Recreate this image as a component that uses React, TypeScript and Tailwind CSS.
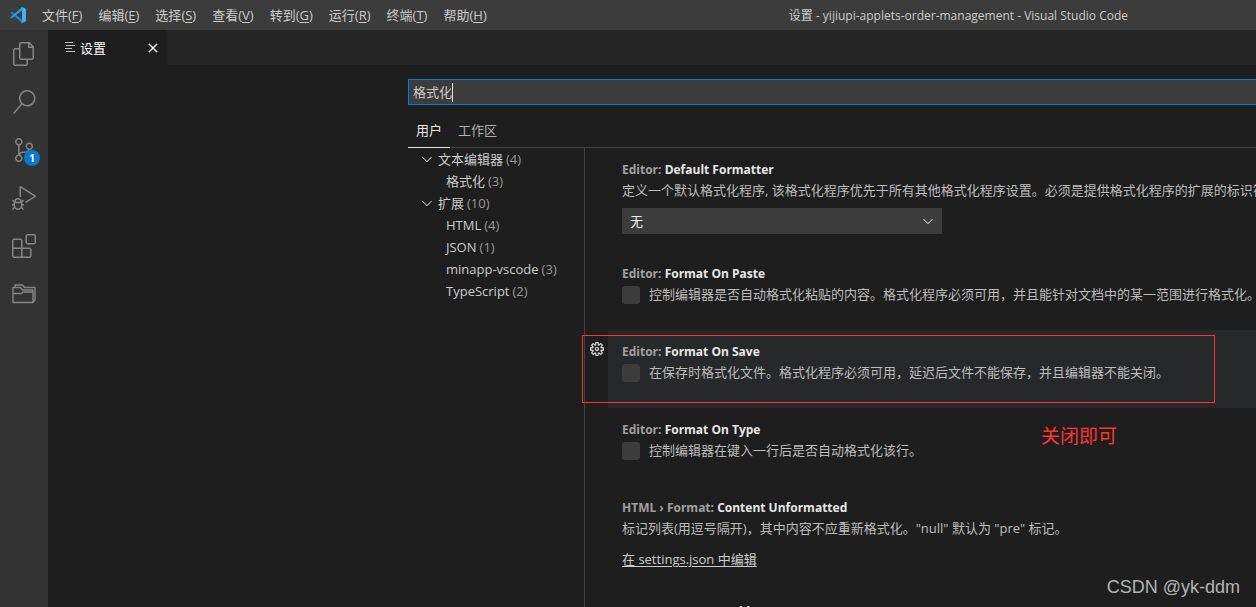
import React from 'react';
import {
  VscChevronDown,
  VscClose,
  VscDebugAlt,
  VscExtensions,
  VscFiles,
  VscSearch,
  VscSettingsGear,
  VscSourceControl,
} from 'react-icons/vsc';

const menus = [
  { label: '文件', key: 'F' },
  { label: '编辑', key: 'E' },
  { label: '选择', key: 'S' },
  { label: '查看', key: 'V' },
  { label: '转到', key: 'G' },
  { label: '运行', key: 'R' },
  { label: '终端', key: 'T' },
  { label: '帮助', key: 'H' },
];

const tree = [
  { label: '文本编辑器', count: 4, group: true },
  { label: '格式化', count: 3 },
  { label: '扩展', count: 10, group: true },
  { label: 'HTML', count: 4 },
  { label: 'JSON', count: 1 },
  { label: 'minapp-vscode', count: 3 },
  { label: 'TypeScript', count: 2 },
];

const Logo: React.FC = () => (
  <svg viewBox="0 0 100 100" className="size-4 shrink-0" aria-hidden="true">
    <path d="M4 33 10 28 76 78 74 99 4 38Q1 35 4 33Z" fill="#1b86cb" />
    <path d="M4 67 10 72 76 22 74 1 4 62Q1 65 4 67Z" fill="#1f9cf0" />
    <path d="M71 1Q75 0 78 1L97 10Q100 12 100 16V84Q100 88 97 90L78 99Q75 100 71 99L75 92V8Z" fill="#3fb0f8" />
  </svg>
);

const FoldersIcon: React.FC = () => (
  <svg viewBox="0 0 24 24" fill="none" stroke="currentColor" strokeWidth="1.4" strokeLinejoin="round" className="size-6">
    <path d="M1 20.5V5.5h7.500l2 2.500h10.500v12.500z" />
    <path d="M1 11.500h8.500l1.500-1.500h10" />
    <path d="M3 5.500V3h7.500l2 2.500h10.500v12.500l-2 2" />
  </svg>
);

const ListIcon: React.FC = () => (
  <svg viewBox="0 0 10 11" className="h-[11px] w-[10px]" stroke="#c5c5c5" aria-hidden="true">
    <path d="M0 .5h8M1 3.500h9M0 6.500h7M1 9.500h9" />
  </svg>
);

const activities = [
  { name: '资源管理器', icon: <VscFiles size={24} /> },
  { name: '搜索', icon: <VscSearch size={24} /> },
  { name: '源代码管理', icon: <VscSourceControl size={24} />, badge: 1 },
  { name: '运行和调试', icon: <VscDebugAlt size={24} /> },
  { name: '扩展', icon: <VscExtensions size={24} /> },
  { name: '项目', icon: <FoldersIcon /> },
];

const TitleBar: React.FC = () => (
  <header className="flex h-[30px] shrink-0 items-center bg-[#3c3c3c] pl-[10px] text-[#cccccc]">
    <Logo />
    <nav className="ml-2 flex">
      {menus.map((m) => (
        <button key={m.key} className="px-2">
          {m.label}(<span className="underline underline-offset-2">{m.key}</span>)
        </button>
      ))}
    </nav>
    <div className="flex-1 pt-0.5 pr-32 text-right text-xs">设置 - yijiupi-applets-order-management - Visual Studio Code</div>
  </header>
);

const ActivityBar: React.FC = () => (
  <aside className="flex w-12 shrink-0 flex-col bg-[#333333] text-[#858585]">
    {activities.map((a) => (
      <button key={a.name} aria-label={a.name} className="relative flex h-12 items-center justify-center">
        {a.icon}
        {a.badge && (
          <span className="absolute top-6 right-2 flex size-4 items-center justify-center rounded-full bg-[#007acc] text-[10px] font-bold text-white">
            {a.badge}
          </span>
        )}
      </button>
    ))}
  </aside>
);

const TreeView: React.FC = () => (
  <ul className="w-44 shrink-0">
    {tree.map((t) => (
      <li key={t.label} className={`flex h-[22px] items-center text-[#cccccc] ${t.group ? 'pl-[11px]' : 'pl-[38px]'}`}>
        {t.group && <VscChevronDown size={16} className="mr-[3px]" />}
        <span>{t.label}</span>
        <span className="ml-[3px] text-[#999999]">({t.count})</span>
      </li>
    ))}
  </ul>
);

interface SettingProps {
  scope: string;
  title: string;
  active?: boolean;
  children?: React.ReactNode;
}

const Setting: React.FC<SettingProps> = ({ scope, title, active, children }) => (
  <section className={`relative ml-[23px] pt-3 pb-[27px] pl-[14px] ${active ? 'bg-[#27282a]' : ''}`}>
    {active && (
      <button aria-label="更多操作" className="absolute top-3 -left-[18px] text-[#e0e0e0]">
        <VscSettingsGear size={14} strokeWidth={0.4} />
      </button>
    )}
    <h3 className="h-[18px] text-xs leading-5 font-bold whitespace-nowrap text-[#a0a0a0]">
      {scope}: <span className="text-[#e7e7e7]">{title}</span>
    </h3>
    {children}
    {active && <div className="pointer-events-none absolute top-[5px] right-[41px] bottom-[5px] -left-[26px] border border-[#ff3333]" />}
  </section>
);

const CheckRow: React.FC<{ children: string }> = ({ children }) => (
  <label className="mt-[3px] flex h-[18px] items-start gap-[9px] whitespace-nowrap text-[#bdbdbd]">
    <input type="checkbox" className="mt-px size-[18px] shrink-0 appearance-none rounded-[3px] bg-[#3c3c3c]" />
    {children}
  </label>
);

const SettingsList: React.FC = () => (
  <main className="min-w-0 flex-1 border-l border-[#414141]">
    <Setting scope="Editor" title="Default Formatter">
      <p className="mt-[3px] whitespace-nowrap text-[#bdbdbd]">
        定义一个默认格式化程序, 该格式化程序优先于所有其他格式化程序设置。必须是提供格式化程序的扩展的标识符。
      </p>
      <div className="relative mt-[9px] -mb-[9px] h-[26px] w-80">
        <select aria-label="Default Formatter" className="size-full appearance-none bg-[#3c3c3c] px-2 text-[#f0f0f0]">
          <option>无</option>
        </select>
        <VscChevronDown size={16} className="pointer-events-none absolute top-[5px] right-[6px] text-[#cccccc]" />
      </div>
    </Setting>
    <Setting scope="Editor" title="Format On Paste">
      <CheckRow>控制编辑器是否自动格式化粘贴的内容。格式化程序必须可用，并且能针对文档中的某一范围进行格式化。</CheckRow>
    </Setting>
    <Setting scope="Editor" title="Format On Save" active>
      <CheckRow>在保存时格式化文件。格式化程序必须可用，延迟后文件不能保存，并且编辑器不能关闭。</CheckRow>
    </Setting>
    <Setting scope="Editor" title="Format On Type">
      <CheckRow>控制编辑器在键入一行后是否自动格式化该行。</CheckRow>
      <span className="absolute top-[14px] right-[139px] text-[19px] leading-7 text-[#ff3333]">关闭即可</span>
    </Setting>
    <Setting scope="HTML › Format" title="Content Unformatted">
      <p className="mt-[3px] whitespace-nowrap text-[#bdbdbd]">
        标记列表(用逗号隔开)，其中内容不应重新格式化。"null" 默认为 "pre" 标记。
      </p>
      <a href="#" className="mt-[13px] -mb-[5px] block w-fit text-[#cccccc] underline underline-offset-2">
        在 settings.json 中编辑
      </a>
    </Setting>
    <Setting scope="HTML › Format" title="Enable" />
  </main>
);

const App: React.FC = () => {
  return (
    <div className="relative flex h-screen flex-col overflow-hidden bg-[#1e1e1e] font-['Open_Sans','Noto_Sans_CJK_SC',sans-serif] text-[13px] leading-[18px]">
      <TitleBar />
      <div className="flex min-h-0 flex-1">
        <ActivityBar />
        <div className="flex min-w-0 flex-1 flex-col">
          <div className="flex h-[35px] shrink-0 bg-[#252526]">
            <div className="flex w-[119px] items-center bg-[#1e1e1e] pr-[6px] pl-[17px] text-white">
              <ListIcon />
              <span className="ml-[5px] flex-1">设置</span>
              <button aria-label="关闭">
                <VscClose size={16} strokeWidth={0.5} />
              </button>
            </div>
          </div>

          <div className="flex min-h-0 flex-1 flex-col pt-[14px] pl-[360px]">
            <div className="relative h-[26px] shrink-0">
              <input
                aria-label="搜索设置"
                defaultValue="格式化"
                className="size-full border border-r-0 border-[#007fd4] bg-[#3c3c3c] px-1 pb-0.5 text-[#cccccc] outline-none"
              />
              <span className="absolute top-1 left-11 h-[19px] w-px bg-[#e0e0e0]" />
            </div>
            <div className="mt-[9px] flex h-[34px] shrink-0 border-b border-[#414141] text-[#b0b0b0]">
              <button className="-mb-px border-b border-[#e7e7e7] px-2 pb-0.5 text-[#e7e7e7]">用户</button>
              <button className="px-2 pb-0.5">工作区</button>
            </div>
            <div className="flex min-h-0 flex-1">
              <TreeView />
              <SettingsList />
            </div>
          </div>
        </div>
      </div>
      <div className="absolute right-4 bottom-2 font-['Liberation_Sans',sans-serif] text-lg leading-6 text-[#b4b4b4]">
        CSDN @yk-ddm
      </div>
    </div>
  );
};

export default App;
